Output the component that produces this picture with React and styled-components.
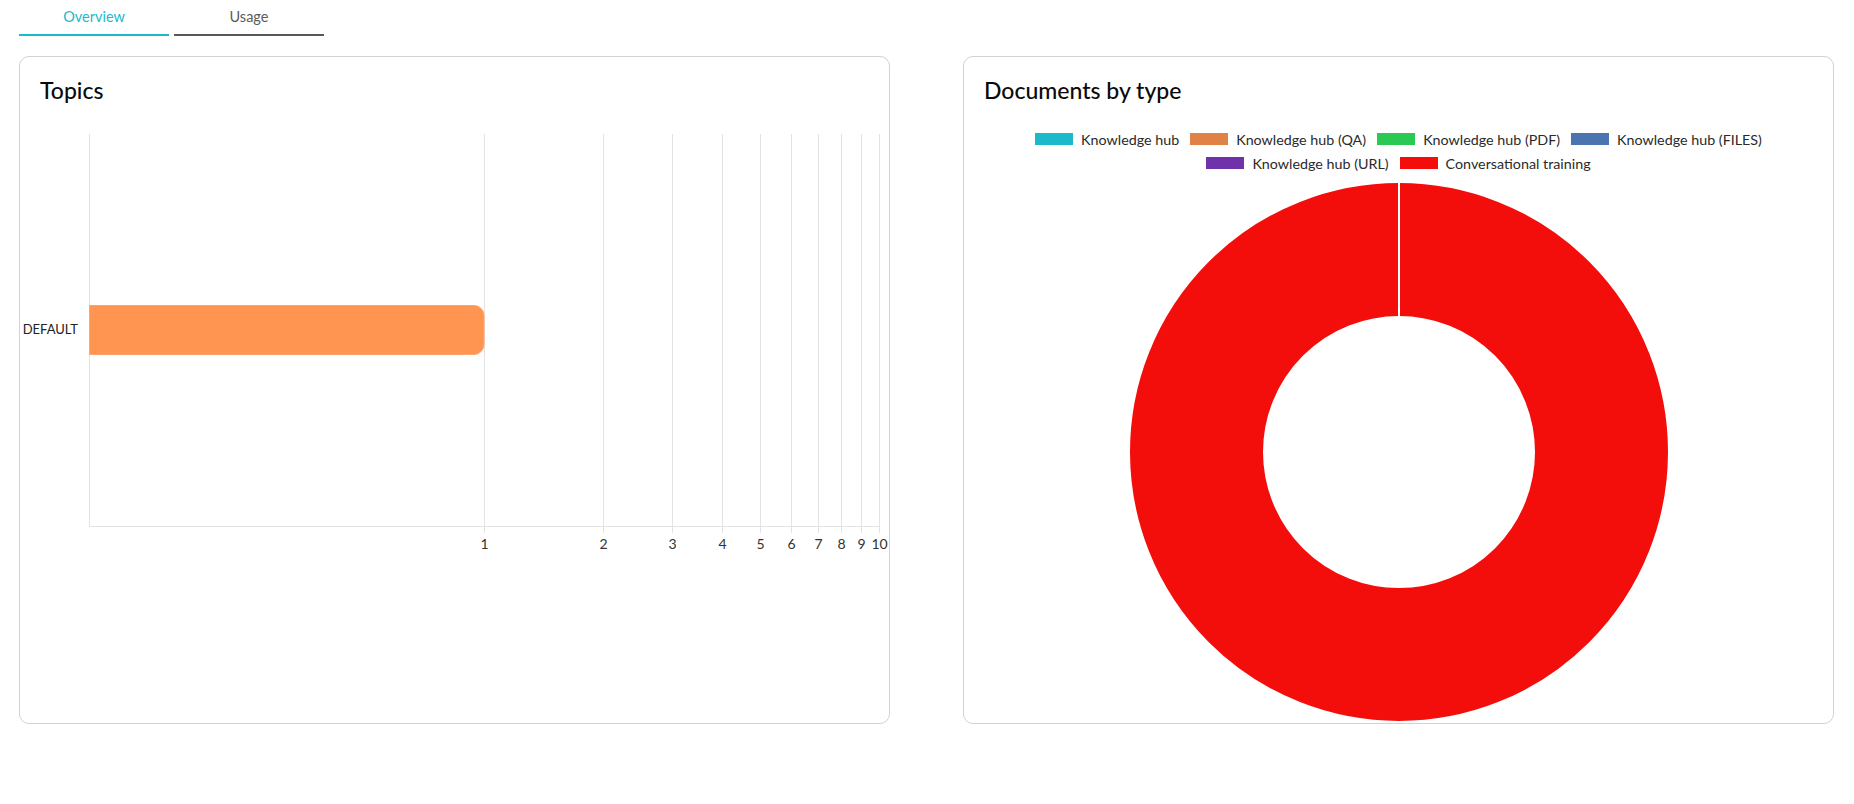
import styled, { createGlobalStyle } from "styled-components";

const legendItems = [
  { label: "Knowledge hub", color: "#1bb9c9" },
  { label: "Knowledge hub (QA)", color: "#e08245" },
  { label: "Knowledge hub (PDF)", color: "#29c954" },
  { label: "Knowledge hub (FILES)", color: "#4a75b0" },
  { label: "Knowledge hub (URL)", color: "#7032ab" },
  { label: "Conversational training", color: "#f30e0c" },
];

const ticks = [1, 2, 3, 4, 5, 6, 7, 8, 9, 10];

// log axis, 0.1 sits on the y axis. x is relative to the svg, which starts 20px into the page
const tickX = (value) => Math.round(69 + 395 * (Math.log10(value) + 1)) + 0.5;

function TopicsChart() {
  return (
    <BarSvg width="869" height="430" viewBox="0 0 869 430">
      {ticks.map((value) => (
        <g key={value}>
          <line x1={tickX(value)} x2={tickX(value)} y1="0" y2="399" stroke="#e3e3e3" />
          <TickLabel x={tickX(value)} y="415" textAnchor="middle">
            {value}
          </TickLabel>
        </g>
      ))}
      <line x1="69.5" x2="69.5" y1="0" y2="393" stroke="#e3e3e3" />
      <line x1="69" x2={tickX(10)} y1="392.5" y2="392.5" stroke="#e3e3e3" />
      <path
        d="M69.5 171.5H454a10 10 0 0 1 10 10v29a10 10 0 0 1 -10 10H69.5z"
        fill="#ff9551"
        stroke="#ffa56c"
      />
      <CategoryLabel x="58" y="200" textAnchor="end">
        DEFAULT
      </CategoryLabel>
    </BarSvg>
  );
}

function DocumentsChart() {
  return (
    <DonutSvg width="540" height="540" viewBox="0 0 540 540">
      <circle cx="270" cy="270" r="202.5" fill="none" stroke="#f30e0c" strokeWidth="133" />
      <line x1="270" x2="270" y1="0" y2="136" stroke="#ffffff" strokeWidth="2" />
    </DonutSvg>
  );
}

export default function App() {
  return (
    <>
      <GlobalStyle />
      <Page>
        <Tabs>
          <Tab $active>Overview</Tab>
          <Tab>Usage</Tab>
        </Tabs>
        <Cards>
          <Card>
            <CardTitle>Topics</CardTitle>
            <TopicsChart />
          </Card>
          <Card>
            <CardTitle>Documents by type</CardTitle>
            <Legend>
              {legendItems.map((item) => (
                <LegendItem key={item.label}>
                  <Swatch $color={item.color} />
                  {item.label}
                </LegendItem>
              ))}
            </Legend>
            <DocumentsChart />
          </Card>
        </Cards>
      </Page>
    </>
  );
}

const GlobalStyle = createGlobalStyle`
  body {
    margin: 0;
    background: #ffffff;
    font-family: "Lato", "Liberation Sans", sans-serif;
  }
`;

const Page = styled.div`
  padding: 0 20px 0 19px;
`;

const Tabs = styled.div`
  display: flex;
  gap: 5px;
`;

const Tab = styled.div`
  width: 150px;
  height: 36px;
  box-sizing: border-box;
  padding-top: 8px;
  text-align: center;
  font-size: 14.5px;
  line-height: 18px;
  color: ${(props) => (props.$active ? "#1bb9c9" : "#5b5b5b")};
  border-bottom: 2px solid ${(props) => (props.$active ? "#1bb9c9" : "#58585a")};
`;

const Cards = styled.div`
  display: grid;
  grid-template-columns: 871px 871px;
  justify-content: space-between;
  margin-top: 20px;
`;

const Card = styled.div`
  height: 668px;
  box-sizing: border-box;
  border: 1px solid #d2d2d2;
  border-radius: 10px;
  display: flex;
  flex-direction: column;
  align-items: center;
`;

const CardTitle = styled.h3`
  align-self: stretch;
  margin: 0;
  height: 76px;
  padding: 18px 0 0 20px;
  box-sizing: border-box;
  font-size: 23px;
  line-height: 30px;
  font-weight: 500;
  color: #0a0a0a;
`;

const BarSvg = styled.svg`
  display: block;
  margin-top: 1px;
`;

const TickLabel = styled.text`
  font-size: 14px;
  font-weight: 400;
  fill: #333333;
`;

const CategoryLabel = styled.text`
  font-size: 13px;
  font-weight: 400;
  fill: #222222;
`;

const Legend = styled.div`
  align-self: stretch;
  display: flex;
  flex-wrap: wrap;
  justify-content: center;
  gap: 12px 11px;
`;

const LegendItem = styled.div`
  display: flex;
  align-items: center;
  gap: 8px;
  height: 12px;
  font-size: 14.3px;
  font-weight: 400;
  color: #2a2a2a;
`;

const Swatch = styled.span`
  width: 38px;
  height: 12px;
  background: ${(props) => props.$color};
`;

const DonutSvg = styled.svg`
  display: block;
  margin-top: 13px;
`;
